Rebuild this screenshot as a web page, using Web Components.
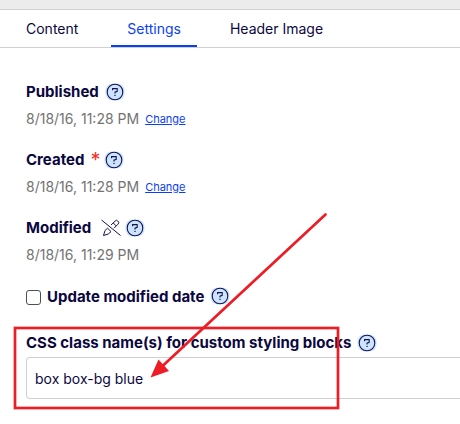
<!DOCTYPE html>
<html lang="en">
<head>
<meta charset="utf-8">
<title>Settings</title>
<style>
  body { margin: 0; background: #fff; color: #0b0840; font: 14px/20px Inter, "Liberation Sans", sans-serif; font-optical-sizing: none; }
</style>
</head>
<body>
<settings-page></settings-page>

<template id="settings-page">
  <style>
    :host { display: block; position: relative; overflow: hidden; min-height: 100vh; }
    header { height: 9px; background: #ececec; border-bottom: 1px solid #d0d0d0; }
    form { display: flex; flex-direction: column; padding: 32px 0 24px 26px; }
    .dates { display: flex; flex-direction: column; gap: 18px; }
    update-option { margin-top: 20px; }
    class-field { margin-top: 23px; }
  </style>
  <header></header>
  <tab-bar>
    <tab-item>Content</tab-item>
    <tab-item active>Settings</tab-item>
    <tab-item>Header Image</tab-item>
  </tab-bar>
  <form>
    <div class="dates">
      <date-field label="Published" changeable>8/18/16, 11:28 PM</date-field>
      <date-field label="Created" required changeable>8/18/16, 11:28 PM</date-field>
      <date-field label="Modified" locked>8/18/16, 11:29 PM</date-field>
    </div>
    <update-option></update-option>
    <class-field></class-field>
  </form>
  <callout-overlay></callout-overlay>
</template>

<template id="tab-bar">
  <style>
    :host { display: block; border-bottom: 1px solid #d0d0d0; }
    nav { display: flex; gap: 17px; padding: 0 10px; }
  </style>
  <nav><slot></slot></nav>
</template>

<template id="tab-item">
  <style>
    :host { display: block; }
    a { display: block; padding: 9px 16px 6px; border-bottom: 2px solid transparent; color: inherit; text-decoration: none; white-space: nowrap; }
    :host([active]) a { color: #0b3ff5; border-color: #0b3ff5; }
  </style>
  <a href="#"><slot></slot></a>
</template>

<template id="help-button">
  <style>
    :host { display: block; }
    button { display: block; border: 0; padding: 0; background: none; cursor: pointer; }
    svg { display: block; }
  </style>
  <button type="button" aria-label="Help">
    <svg width="20" height="20" viewBox="0 0 20 20" fill="none">
      <rect x="0.5" y="1.5" width="19" height="17" rx="7" fill="#cce4ff"/>
      <circle cx="10" cy="10" r="7.8" stroke="#15124d" stroke-width="1.1"/>
      <path d="M7.6 8.2V6.6H12.2V9.3L10 10.2V11.6" stroke="#15124d" stroke-width="1.1"/>
      <rect x="9.4" y="12.8" width="1.2" height="1.2" fill="#15124d"/>
    </svg>
  </button>
</template>

<template id="date-field">
  <style>
    :host { display: block; }
    .head { display: flex; align-items: center; height: 24px; gap: 4px; }
    h2 { margin: 0 2px 0 0; font-size: 15px; line-height: 24px; font-weight: 700; color: #0b0840; }
    .star { display: none; color: #f0342c; font-size: 20px; line-height: 24px; }
    .pen { display: none; margin-left: 4px; }
    :host([required]) .star { display: block; }
    :host([locked]) .pen { display: block; }
    .value { display: flex; align-items: center; gap: 6px; margin-top: 4px; height: 22px; color: #737373; }
    a { display: none; font-size: 11px; color: #0b3ff5; }
    :host([changeable]) a { display: block; }
  </style>
  <div class="head">
    <h2></h2><span class="star">*</span>
    <svg class="pen" width="20" height="18" viewBox="0 0 20 18" fill="none" stroke="#15124d" stroke-width="1" aria-hidden="true">
      <path d="M0.5 1L19.5 16.5"/>
      <path d="M2.5 16.5L4 11.5L6.5 9.2L10 12.6L7.3 15Z"/>
      <path d="M10 6L14 2.2L15.5 1.2L18 3.3L17 5.2L13 9.2M12.3 4L15 6.8"/>
    </svg>
    <help-button></help-button>
  </div>
  <div class="value"><slot></slot><a href="#">Change</a></div>
</template>

<template id="update-option">
  <style>
    :host { display: flex; align-items: center; gap: 6px; }
    label { display: flex; align-items: center; gap: 6px; font-size: 15px; font-weight: 700; line-height: 22px; }
    input { appearance: none; width: 15px; height: 15px; margin: 0; border: 1px solid #4f4f4f; border-radius: 3px; background: #fff; }
    input:checked { background: #0b3ff5; }
    help-button { padding-bottom: 2px; }
  </style>
  <label><input type="checkbox">Update modified date</label>
  <help-button></help-button>
</template>

<template id="class-field">
  <style>
    :host { display: block; }
    .head { display: flex; align-items: center; gap: 6px; height: 24px; }
    label { font-size: 15px; font-weight: 700; white-space: nowrap; }
    input { display: block; box-sizing: border-box; width: 100%; height: 42px; margin: 2px 0 0; padding: 0 8px; border: 1px solid #d0d0d0; border-right: 0; border-radius: 4px 0 0 4px; background: #fff; font: inherit; color: inherit; outline: 0; }
  </style>
  <div class="head">
    <label for="classes">CSS class name(s) for custom styling blocks</label>
    <help-button></help-button>
  </div>
  <input id="classes" type="text" value="box box-bg blue">
</template>

<template id="callout-overlay">
  <style>
    :host { display: block; position: absolute; top: 0; left: 0; pointer-events: none; }
    svg { display: block; }
  </style>
  <svg width="460" height="424" viewBox="0 0 460 424" fill="none" stroke="#ee1c25" aria-hidden="true">
    <rect x="15" y="328" width="323" height="80" stroke-width="2.7"/>
    <path d="M325.5 214.5L162 366.5" stroke-width="2.7" stroke-linecap="round"/>
    <path d="M150.5 377.5L158.5 359.5L169 371Z" fill="#ee1c25" stroke="none"/>
  </svg>
</template>

<script>
  class Base extends HTMLElement {
    constructor() {
      super();
      const source = document.getElementById(this.localName);
      this.attachShadow({ mode: "open" }).append(source.content.cloneNode(true));
    }
  }
  class DateField extends Base {
    connectedCallback() {
      this.shadowRoot.querySelector("h2").textContent = this.getAttribute("label");
    }
  }
  customElements.define("date-field", DateField);
  for (const name of ["help-button", "tab-item", "tab-bar", "update-option", "class-field", "callout-overlay", "settings-page"]) {
    customElements.define(name, class extends Base {});
  }
</script>
</body>
</html>
